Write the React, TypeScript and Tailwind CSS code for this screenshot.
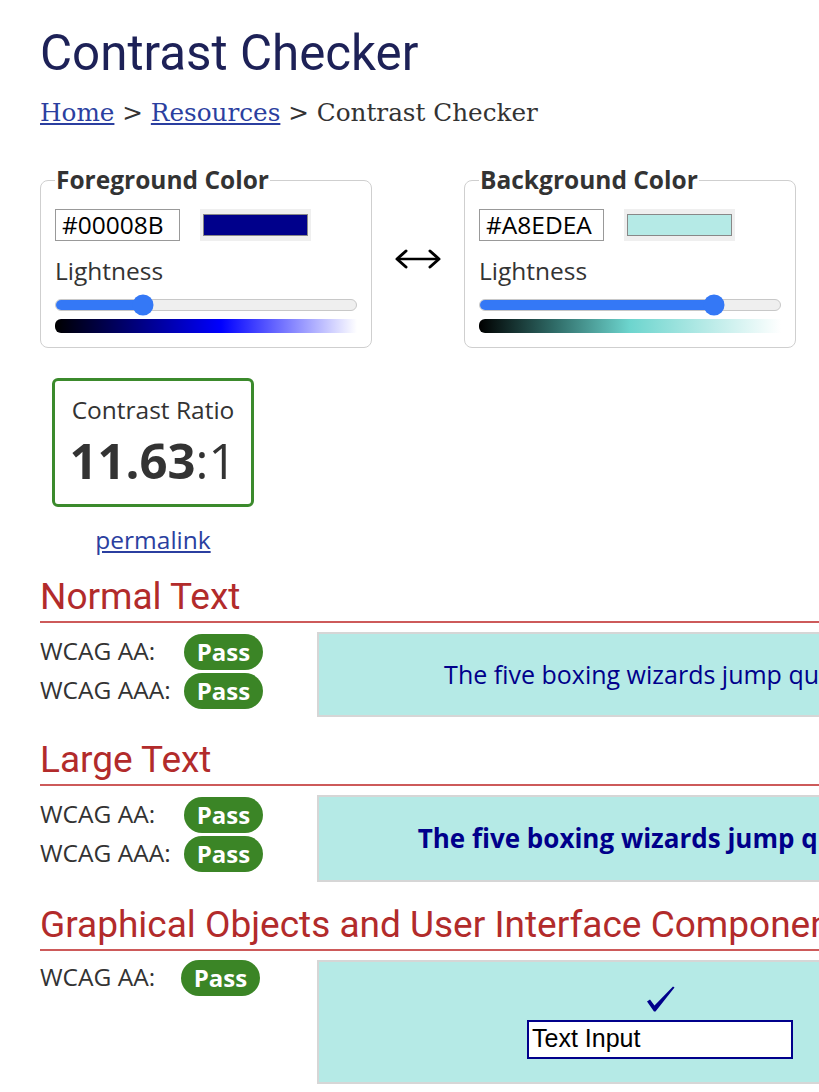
import React from 'react'

const sans = { fontFamily: '"Open Sans", sans-serif' }

function Pass() {
  return (
    <span className="inline-flex h-[36px] w-[79px] items-center justify-center rounded-full bg-[#3b8526] text-[24px] font-bold text-white">
      Pass
    </span>
  )
}

function ColorPanel({
  label,
  hex,
  swatch,
  pos,
  gradient,
}: {
  label: string
  hex: string
  swatch: string
  pos: number
  gradient: string
}) {
  return (
    <fieldset className="w-[332px] rounded-lg border border-[#cfcfcf] px-[14px] pb-[14px] pt-[17px]">
      <legend className="px-[1px] text-[24.5px] font-bold leading-[24px] text-[#333]">{label}</legend>
      <div className="flex items-center gap-5">
        <div className="flex h-[32px] w-[125px] items-center border border-[#999] px-[6px] text-[24.5px] text-black">
          {hex}
        </div>
        <div className="flex h-[32px] w-[111px] items-center justify-center bg-[#efefef]">
          <div className="h-[22px] w-[105px] border border-[#888]" style={{ background: swatch }} />
        </div>
      </div>
      <div className="mt-[12px] text-[24.5px] leading-[36px] text-[#333]">Lightness</div>
      <div className="relative mt-[10px] h-[12px] rounded-full border border-[#c8c8c8] bg-[#efefef]">
        <div className="h-full rounded-full bg-[#3478f6]" style={{ width: `${pos}%` }} />
        <div
          className="absolute top-1/2 h-[21px] w-[21px] -translate-x-1/2 -translate-y-1/2 rounded-full bg-[#3478f6]"
          style={{ left: `${pos}%` }}
        />
      </div>
      <div className="mt-[8px] h-[14px] rounded-l-md" style={{ background: gradient }} />
    </fieldset>
  )
}

function Heading({ children }: { children: React.ReactNode }) {
  return (
    <h2
      className="whitespace-nowrap border-b-2 border-[#cd5a5a] pb-[3px] text-[37px] leading-[42px] text-[#b22b2b]"
      style={{ fontFamily: 'Roboto, sans-serif' }}
    >
      {children}
    </h2>
  )
}

function Row({ label, w }: { label: string; w: string }) {
  return (
    <div className="flex h-[39px] items-center">
      <span className={`${w} text-[24.5px] text-[#333]`}>{label}</span>
      <Pass />
    </div>
  )
}

export default function App() {
  return (
    <div className="w-[819px] overflow-hidden bg-white" style={sans}>
      <div className="w-[1003px] pl-[40px] pb-10">
        <h1
          className="pt-[24px] text-[49.3px] leading-[58px] text-[#1d2157]"
          style={{ fontFamily: 'Roboto, sans-serif' }}
        >
          Contrast Checker
        </h1>
        <nav
          className="mt-[16px] text-[24.7px] leading-[30px] text-[#333]"
          style={{ fontFamily: '"DejaVu Serif", serif' }}
        >
          <a className="text-[#2b3fa0] underline">Home</a> &gt;{' '}
          <a className="text-[#2b3fa0] underline">Resources</a> &gt; Contrast Checker
        </nav>

        <div className="mt-[40px] flex items-center">
          <ColorPanel
            label="Foreground Color"
            hex="#00008B"
            swatch="#00008b"
            pos={29}
            gradient="linear-gradient(to right, #000 0%, #00008b 30%, #0000ff 55%, #ffffff 100%)"
          />
          <div className="flex w-[92px] justify-center pt-[2px]">
            <svg width="48" height="22" viewBox="0 0 48 22">
              <path d="M4 11h40" stroke="#000" strokeWidth="2.5" />
              <path d="M12 3L3 11l9 8" fill="none" stroke="#000" strokeWidth="3" strokeLinecap="round" strokeLinejoin="round" />
              <path d="M36 3l9 8-9 8" fill="none" stroke="#000" strokeWidth="3" strokeLinecap="round" strokeLinejoin="round" />
            </svg>
          </div>
          <ColorPanel
            label="Background Color"
            hex="#A8EDEA"
            swatch="#b5eae6"
            pos={78}
            gradient="linear-gradient(to right, #000 0%, #2f6b67 25%, #6dd5ce 50%, #ffffff 100%)"
          />
        </div>

        <div className="ml-[12px] mt-[30px] w-[202px]">
          <div className="flex h-[129px] flex-col items-center justify-center rounded-md border-[3px] border-[#3b8a2c]">
            <div className="text-[24.5px] leading-[34px] text-[#333]">Contrast Ratio</div>
            <div className="text-[49px] leading-[66px] text-[#333]">
              <span className="font-bold">11.63</span>:1
            </div>
          </div>
          <div className="mt-[17px] text-center text-[24.5px] leading-[32px]">
            <a className="text-[#2b3fa0] underline">permalink</a>
          </div>
        </div>

        <div className="mt-[20px]">
          <Heading>Normal Text</Heading>
          <div className="mt-[9px] flex gap-[54px]">
            <div>
              <Row label="WCAG AA:" w="w-[144px]" />
              <Row label="WCAG AAA:" w="w-[144px]" />
            </div>
            <div className="flex h-[85px] flex-1 items-center justify-center whitespace-nowrap border-2 border-[#d6d6d6] bg-[#b5eae6] text-[25px] text-[#00008b]">
              The five boxing wizards jump quickly.
            </div>
          </div>
        </div>

        <div className="mt-[22px]">
          <Heading>Large Text</Heading>
          <div className="mt-[9px] flex gap-[54px]">
            <div>
              <Row label="WCAG AA:" w="w-[144px]" />
              <Row label="WCAG AAA:" w="w-[144px]" />
            </div>
            <div className="flex h-[87px] flex-1 items-center justify-center whitespace-nowrap border-2 border-[#d6d6d6] bg-[#b5eae6] text-[26px] font-bold text-[#00008b]">
              The five boxing wizards jump quickly.
            </div>
          </div>
        </div>

        <div className="mt-[22px]">
          <Heading>Graphical Objects and User Interface Components</Heading>
          <div className="mt-[9px] flex gap-[57px]">
            <div className="-mt-[2px]">
              <Row label="WCAG AA:" w="w-[141px]" />
            </div>
            <div className="flex h-[124px] flex-1 flex-col items-center justify-center border-2 border-[#d6d6d6] bg-[#b5eae6]">
              <svg width="28" height="26" viewBox="0 0 28 26" className="ml-[2px]">
                <path d="M0 15.5L3 13.5L7.5 19.5L26 0.5L27.5 1.5L8.5 25.5L7 25.5Z" fill="#00008b" />
              </svg>
              <div
                className="mt-[8px] flex h-[39px] w-[266px] items-center border-2 border-[#00008b] bg-white px-[3px] text-[25px] text-black"
                style={{ fontFamily: '"Liberation Sans", Arial, sans-serif' }}
              >
                Text Input
              </div>
            </div>
          </div>
        </div>
      </div>
    </div>
  )
}
